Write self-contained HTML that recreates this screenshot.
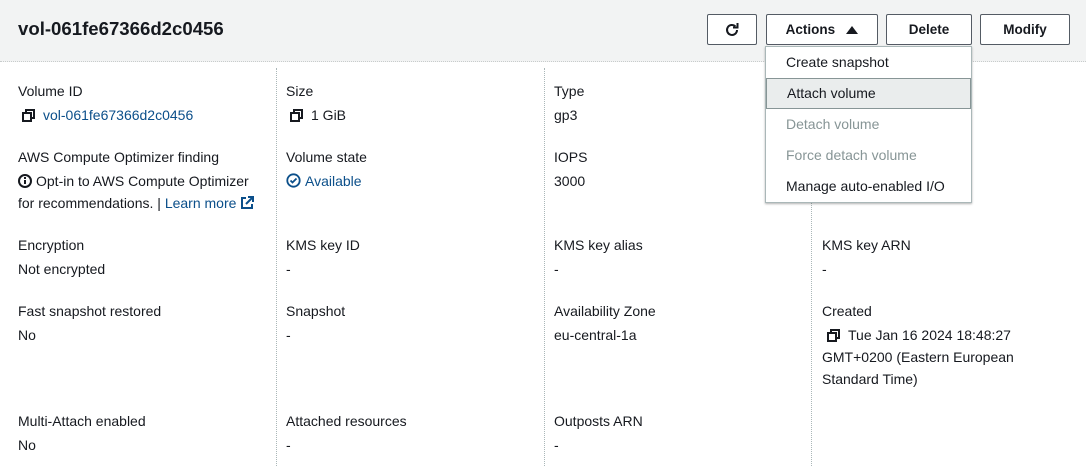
<!DOCTYPE html>
<html><head><meta charset="utf-8"><style>
*{margin:0;padding:0;box-sizing:border-box}
body{width:1086px;height:466px;background:#fff;font-family:"Liberation Sans",sans-serif;font-size:14px;color:#16191f;position:relative;overflow:hidden}
.hdr{position:absolute;left:0;top:0;width:1086px;height:62px;background:#f2f3f3;border-bottom:1px dotted #c8cccc}
.title{position:absolute;left:18px;top:18px;font-size:18.6px;font-weight:bold;color:#16191f}
.btn{position:absolute;top:14px;height:31px;border:1px solid #545b64;border-radius:2px;background:#fff;font-weight:bold;font-size:13.5px;color:#16191f;display:flex;align-items:center;justify-content:center}
.t{position:absolute;white-space:nowrap;line-height:22px}
.v{color:#16191f}
.lnk{color:#0b4f8a}
.div{position:absolute;top:68px;bottom:0;width:0;border-left:1px dotted #aab7b8}
.menu{position:absolute;left:765px;top:46px;width:207px;height:157px;background:#fff;border:1px solid #aab7b8;box-shadow:0 1px 2px rgba(0,0,0,.3)}
.mi{position:absolute;left:0;width:205px;height:31px;line-height:31px;padding-left:20px;font-size:14px}
.ico{display:inline-block;vertical-align:-2px;margin-right:8px}
</style></head><body>
<div class="hdr"></div>
<div class="title">vol-061fe67366d2c0456</div>
<div class="btn" style="left:707px;width:50px"><svg width="16" height="16" viewBox="0 0 16 16"><path d="M13 8a5 5 0 1 1-1.6-3.7" fill="none" stroke="#16191f" stroke-width="2"/><path d="M9 3.5h4.5V-1" fill="none" stroke="#16191f" stroke-width="2" transform="translate(0,2)"/></svg></div>
<div class="btn" style="left:766px;width:112px">Actions&nbsp;&nbsp;&nbsp;<svg width="12" height="9"><path d="M0 9L6 1L12 9Z" fill="#16191f"/></svg></div>
<div class="btn" style="left:886px;width:86px">Delete</div>
<div class="btn" style="left:980px;width:90px">Modify</div>

<div class="div" style="left:276px"></div>
<div class="div" style="left:544px"></div>
<div class="div" style="left:811px"></div>

<div class="t" style="left:18px;top:80px">Volume ID</div>
<div class="t lnk" style="left:22px;top:104px"><svg class="ico" width="13" height="13"><rect x="1" y="4" width="8" height="8" fill="none" stroke="#16191f" stroke-width="2"/><path d="M4 4V1h8v8H9" fill="none" stroke="#16191f" stroke-width="2"/></svg>vol-061fe67366d2c0456</div>
<div class="t" style="left:18px;top:146px">AWS Compute Optimizer finding</div>
<div class="t" style="left:18px;top:170px"><svg class="ico" style="margin-right:4px" width="14" height="14"><circle cx="7" cy="7" r="6" fill="none" stroke="#16191f" stroke-width="2"/><rect x="6" y="6" width="2" height="4" fill="#16191f"/><rect x="6" y="3" width="2" height="2" fill="#16191f"/></svg>Opt-in to AWS Compute Optimizer</div>
<div class="t" style="left:18px;top:192px">for recommendations. | <span class="lnk">Learn more</span> <svg width="14" height="14" style="vertical-align:-2px"><path d="M6 2H2v10h10V8" fill="none" stroke="#0b4f8a" stroke-width="2"/><path d="M8 1h5v5M13 1L6 8" fill="none" stroke="#0b4f8a" stroke-width="2"/></svg></div>
<div class="t" style="left:18px;top:234px">Encryption</div>
<div class="t v" style="left:18px;top:258px">Not encrypted</div>
<div class="t" style="left:18px;top:300px">Fast snapshot restored</div>
<div class="t v" style="left:18px;top:324px">No</div>
<div class="t" style="left:18px;top:410px">Multi-Attach enabled</div>
<div class="t v" style="left:18px;top:434px">No</div>

<div class="t" style="left:286px;top:80px">Size</div>
<div class="t v" style="left:290px;top:104px"><svg class="ico" width="13" height="13"><rect x="1" y="4" width="8" height="8" fill="none" stroke="#16191f" stroke-width="2"/><path d="M4 4V1h8v8H9" fill="none" stroke="#16191f" stroke-width="2"/></svg>1 GiB</div>
<div class="t" style="left:286px;top:146px">Volume state</div>
<div class="t lnk" style="left:286px;top:170px"><svg class="ico" style="margin-right:4px" width="15" height="15"><circle cx="7.5" cy="7.5" r="6.2" fill="none" stroke="#0b4f8a" stroke-width="1.8"/><path d="M4.5 7.5l2 2 4-4" fill="none" stroke="#0b4f8a" stroke-width="1.8"/></svg>Available</div>
<div class="t" style="left:286px;top:234px">KMS key ID</div>
<div class="t v" style="left:286px;top:258px">-</div>
<div class="t" style="left:286px;top:300px">Snapshot</div>
<div class="t v" style="left:286px;top:324px">-</div>
<div class="t" style="left:286px;top:410px">Attached resources</div>
<div class="t v" style="left:286px;top:434px">-</div>

<div class="t" style="left:554px;top:80px">Type</div>
<div class="t v" style="left:554px;top:104px">gp3</div>
<div class="t" style="left:554px;top:146px">IOPS</div>
<div class="t v" style="left:554px;top:170px">3000</div>
<div class="t" style="left:554px;top:234px">KMS key alias</div>
<div class="t v" style="left:554px;top:258px">-</div>
<div class="t" style="left:554px;top:300px">Availability Zone</div>
<div class="t v" style="left:554px;top:324px">eu-central-1a</div>
<div class="t" style="left:554px;top:410px">Outposts ARN</div>
<div class="t v" style="left:554px;top:434px">-</div>

<div class="t" style="left:822px;top:234px">KMS key ARN</div>
<div class="t v" style="left:822px;top:258px">-</div>
<div class="t" style="left:822px;top:300px">Created</div>
<div class="t v" style="left:827px;top:324px"><svg class="ico" width="13" height="13"><rect x="1" y="4" width="8" height="8" fill="none" stroke="#16191f" stroke-width="2"/><path d="M4 4V1h8v8H9" fill="none" stroke="#16191f" stroke-width="2"/></svg>Tue Jan 16 2024 18:48:27</div>
<div class="t v" style="left:822px;top:346px">GMT+0200 (Eastern European</div>
<div class="t v" style="left:822px;top:368px">Standard Time)</div>

<div class="menu">
<div class="mi" style="top:0">Create snapshot</div>
<div class="mi" style="top:31px;background:#eaeded;border:1px solid #879596;line-height:29px;padding-left:20px">Attach volume</div>
<div class="mi" style="top:62px;color:#879596">Detach volume</div>
<div class="mi" style="top:93px;color:#879596">Force detach volume</div>
<div class="mi" style="top:124px">Manage auto-enabled I/O</div>
</div>
</body></html>
